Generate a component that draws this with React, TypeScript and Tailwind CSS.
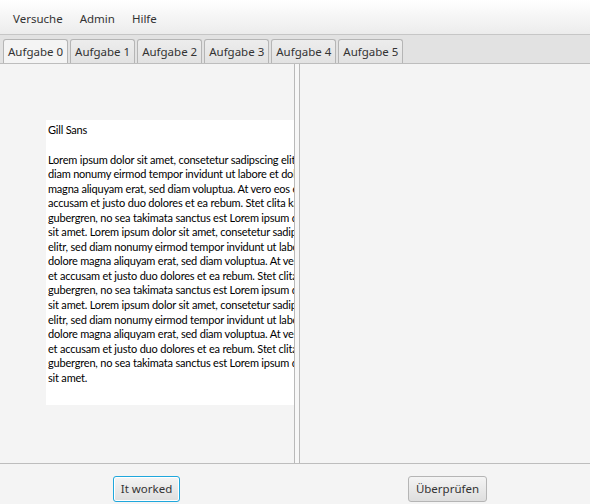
import React from "react";

const lines = [
  "Lorem ipsum dolor sit amet, consetetur sadipscing elitr, sed",
  "diam nonumy eirmod tempor invidunt ut labore et dolore",
  "magna aliquyam erat, sed diam voluptua. At vero eos et",
  "accusam et justo duo dolores et ea rebum. Stet clita kasd",
  "gubergren, no sea takimata sanctus est Lorem ipsum dolor",
  "sit amet. Lorem ipsum dolor sit amet, consetetur sadipscing",
  "elitr, sed diam nonumy eirmod tempor invidunt ut labore et",
  "dolore magna aliquyam erat, sed diam voluptua. At vero eos",
  "et accusam et justo duo dolores et ea rebum. Stet clita kasd",
  "gubergren, no sea takimata sanctus est Lorem ipsum dolor",
  "sit amet. Lorem ipsum dolor sit amet, consetetur sadipscing",
  "elitr, sed diam nonumy eirmod tempor invidunt ut labore et",
  "dolore magna aliquyam erat, sed diam voluptua. At vero eos",
  "et accusam et justo duo dolores et ea rebum. Stet clita kasd",
  "gubergren, no sea takimata sanctus est Lorem ipsum dolor",
  "sit amet.",
];

const tabs = ["Aufgabe 0", "Aufgabe 1", "Aufgabe 2", "Aufgabe 3", "Aufgabe 4", "Aufgabe 5"];

export default function App() {
  return (
    <div
      className="w-[590px] h-[504px] overflow-hidden flex flex-col bg-[#f4f4f4] text-[#333333] text-[11.5px]"
      style={{ fontFamily: '"Noto Sans", "Open Sans", sans-serif' }}
    >
      {/* Menu bar */}
      <div className="h-[35px] shrink-0 flex items-center pt-[3px] pl-[13px] gap-[17px] bg-gradient-to-b from-[#ffffff] to-[#ececec] border-b border-[#c6c6c6]">
        <span>Versuche</span>
        <span>Admin</span>
        <span>Hilfe</span>
      </div>

      {/* Tab header */}
      <div className="h-[29px] shrink-0 flex items-end pl-[3px] gap-[2px] bg-[#e2e2e2] border-b border-[#bdbdbd]">
        {tabs.map((t, i) => (
          <div
            key={t}
            className={
              i === 0
                ? "h-[24px] px-[4px] flex items-center pt-[1px] rounded-t-[3px] border border-b-0 border-[#b5b5b5] bg-[#f4f4f4]"
                : "h-[24px] px-[4px] flex items-center pt-[1px] rounded-t-[3px] border border-b-0 border-[#b5b5b5] bg-gradient-to-b from-[#ededed] to-[#e2e2e2]"
            }
          >
            {t}
          </div>
        ))}
      </div>

      {/* Split pane */}
      <div className="flex-1 flex border-b border-[#bdbdbd] min-h-0">
        <div className="w-[294px] shrink-0 pt-[56px] pl-[46px] overflow-hidden">
          <div
            className="w-[300px] h-[285px] bg-white pl-[2px] pt-[3px] text-[11px] tracking-[-0.2px] leading-[14.55px] text-black"
            style={{ fontFamily: '"Lato", "Liberation Sans", sans-serif' }}
          >
            <div>Gill Sans</div>
            <div className="h-[15px]" />
            {lines.map((l, i) => (
              <div key={i} className="whitespace-nowrap">
                {l}
              </div>
            ))}
          </div>
        </div>
        <div className="w-[6px] shrink-0 border-x border-[#b9b9b9] bg-[#f7f7f7]" />
        <div className="flex-1" />
      </div>

      {/* Bottom bar */}
      <div className="h-[40px] shrink-0 flex pt-[12px]">
        <div className="w-[293px] flex justify-center">
          <button className="h-[26px] px-[7px] rounded-[3px] border-[1.5px] border-[#1fa7dc] bg-gradient-to-b from-[#f4f4f4] to-[#dedede] text-[#333333] shadow-[inset_0_0_0_1px_#ffffff]">
            It worked
          </button>
        </div>
        <div className="flex-1 flex justify-center pl-[12px]">
          <button className="h-[26px] px-[7px] rounded-[3px] border border-[#b5b5b5] bg-gradient-to-b from-[#f4f4f4] to-[#dedede] text-[#333333]">
            Überprüfen
          </button>
        </div>
      </div>
    </div>
  );
}
